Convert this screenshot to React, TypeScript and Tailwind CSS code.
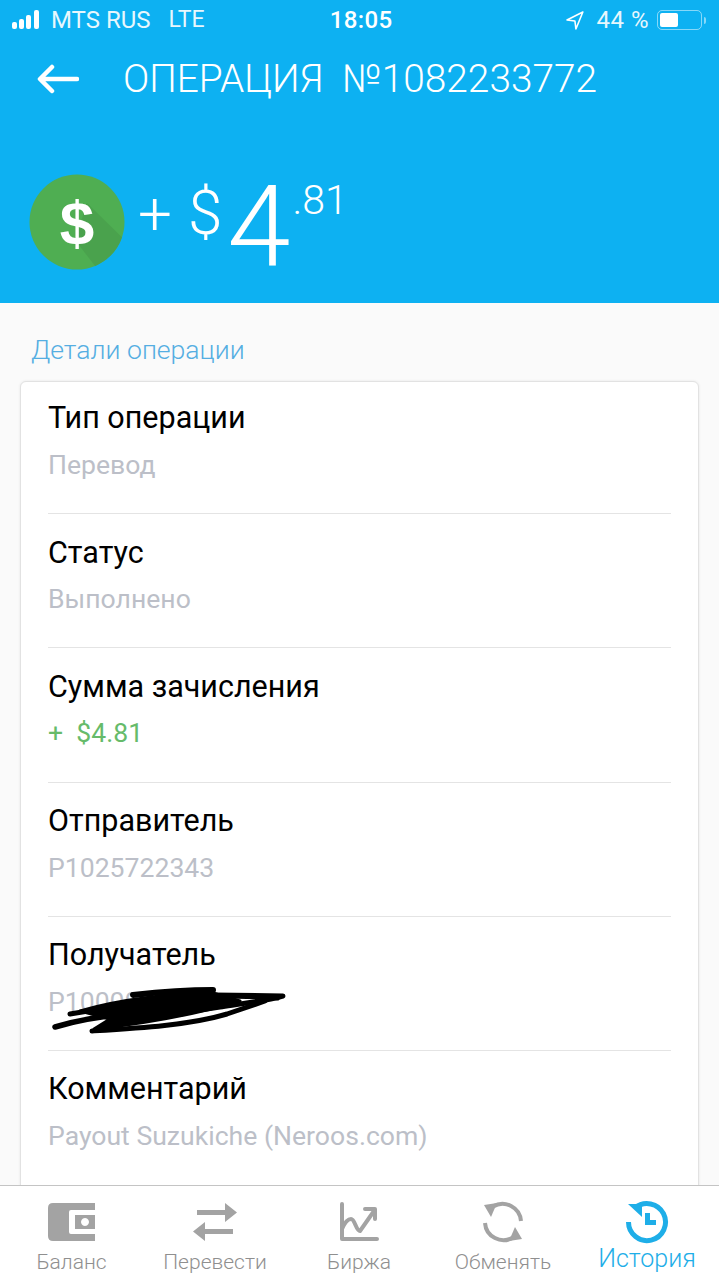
import React from 'react';

const rows = [
  { label: 'Тип операции', value: 'Перевод' },
  { label: 'Статус', value: 'Выполнено' },
  { label: 'Сумма зачисления', value: '+  $4.81', green: true },
  { label: 'Отправитель', value: 'P1025722343' },
  { label: 'Получатель', value: 'P1000000000', scribble: true },
  { label: 'Комментарий', value: 'Payout Suzukiche (Neroos.com)' },
];

const Scribble = () => (
  <svg className="absolute left-[2px] top-[70px]" width="250" height="50" viewBox="0 0 250 50" fill="none" stroke="#000" strokeLinecap="round" strokeLinejoin="round">
    <path d="M30 24 C70 12 125 6 163 6 L190 14 C150 26 100 36 44 42 L60 32 Z" fill="#000" strokeWidth="3" />
    <path d="M83 8 C110 5 140 3 163 3" strokeWidth="6" />
    <path d="M20 27 C60 20 100 14 163 8 L233 9 C215 14 190 17 170 20 C140 25 100 30 60 33" strokeWidth="5" />
    <path d="M42 44 C90 41 140 38 177 27 L215 14" strokeWidth="5" />
    <path d="M5 40 C25 34 45 30 70 28" strokeWidth="5.5" />
    <path d="M165 10 C185 10 205 10 228 12" strokeWidth="3" />
  </svg>
);

const Row = ({ label, value, green, scribble, last, first }: { label: string; value: string; green?: boolean; scribble?: boolean; last?: boolean; first?: boolean }) => (
  <div className={`relative mx-[27px] h-[134.2px] pt-[21.4px] ${first ? 'mt-[-2px]' : ''} ${last ? '' : 'border-b border-[#e4e4e4]'}`}>
    <div className="text-[30.5px] leading-[34px] text-black">{label}</div>
    <div className={`mt-[12.6px] whitespace-pre text-[26.6px] leading-[34px] ${green ? 'text-[#66bb6a]' : 'text-[#bcbfc8]'}`}>{value}</div>
    {scribble && <Scribble />}
  </div>
);

const Wallet = () => (
  <svg width="48" height="38" viewBox="0 0 48 38" fill="#a3a3a3">
    <path d="M47 0 H5 Q0 0 0 5 V33 Q0 38 5 38 H47 V31 H23 Q21 31 21 29 V9 Q21 7 23 7 H47 Z" />
    <path fillRule="evenodd" d="M27 12 H47 V26 H27 Z M37 15 a4 4 0 1 0 0.01 0 Z" />
  </svg>
);

const Transfer = () => (
  <svg width="46" height="38" viewBox="0 0 46 38" fill="#a3a3a3">
    <path d="M5 7 H33 V0 L45 9.5 L33 19 V12 H5 Z" />
    <path d="M41 26 H13 V19 L1 28.5 L13 38 V31 H41 Z" />
  </svg>
);

const Chart = () => (
  <svg width="40" height="40" viewBox="0 0 40 40" fill="none" stroke="#a3a3a3" strokeWidth="4" strokeLinecap="round" strokeLinejoin="round">
    <path d="M3 2 V37 H38" />
    <path d="M3 27 C6 20 9 17 12 17 C16 17 17 29 21 29 L35 9" />
    <path d="M26 7 H36 V17" />
  </svg>
);

const Exchange = () => (
  <svg width="42" height="42" viewBox="0 0 42 42" fill="none">
    <path d="M39 20 A18.5 18.5 0 0 0 11 5.5" stroke="#a3a3a3" strokeWidth="4" />
    <path d="M3 22 A18.5 18.5 0 0 0 31 36.5" stroke="#a3a3a3" strokeWidth="4" />
    <path d="M2 4 L15 2 L9 16 Z" fill="#a3a3a3" />
    <path d="M40 38 L27 40 L33 26 Z" fill="#a3a3a3" />
  </svg>
);

const History = () => (
  <svg width="44" height="44" viewBox="0 0 44 44" fill="none">
    <path d="M10 8 A18.5 18.5 0 1 1 3.5 22" stroke="#1eaee8" strokeWidth="5" />
    <path d="M3 4 H17 V17 Z" fill="#1eaee8" />
    <path d="M20 13 H25 V20 H31 V25 H20 Z" fill="#1eaee8" />
  </svg>
);

const tabs = [
  { label: 'Баланс', icon: <Wallet />, cls: 'w-[143px]' },
  { label: 'Перевести', icon: <Transfer />, cls: 'w-[144px]' },
  { label: 'Биржа', icon: <Chart />, cls: 'w-[144px]' },
  { label: 'Обменять', icon: <Exchange />, cls: 'w-[144px]' },
  { label: 'История', icon: <History />, cls: 'w-[144px]', active: true },
];

export default function App() {
  return (
    <div className="flex h-[1280px] w-[719px] flex-col overflow-hidden bg-[#fafafa] font-['Roboto',sans-serif]">
      <header className="h-[303px] shrink-0 bg-[#0db1f2] text-white">
        <div className="flex h-[40px] items-center pl-[12px] pr-[13px] text-[24px] font-normal">
          <div className="flex w-[292px] items-center">
            <svg width="33" height="20" viewBox="0 0 33 20" fill="#fff" className="mr-[6px]">
              <rect x="0" y="12" width="5" height="7" rx="2" />
              <rect x="7" y="9" width="5" height="10" rx="2" />
              <rect x="14" y="5" width="5" height="14" rx="2" />
              <rect x="22" y="0" width="5" height="19" rx="2" />
            </svg>
            <span className="opacity-90">MTS RUS</span>
            <span className="ml-[18px] text-[23px] opacity-90">LTE</span>
          </div>
          <span className="ml-[28px] text-[24px] font-medium tracking-[0.4px]">18:05</span>
          <svg className="ml-[172px]" width="20" height="20" viewBox="0 0 20 20" fill="none" stroke="#fff" strokeWidth="1.6" strokeLinejoin="round">
            <path d="M18 2 L2 10 L10 11 L11 19 Z" />
          </svg>
          <span className="ml-[12px] whitespace-nowrap tracking-[0.5px] opacity-90">44 %</span>
          <div className="ml-[8px] flex items-center">
            <div className="h-[20px] w-[45px] rounded-[5px] border border-white/50 p-[2px]">
              <div className="h-full w-[18px] rounded-[2px] bg-white" />
            </div>
            <div className="ml-[2px] h-[7px] w-[2px] rounded-r bg-white/50" />
          </div>
        </div>
        <div className="flex h-[78px] items-center pl-[37px]">
          <svg width="42" height="32" viewBox="0 0 42 32" fill="none" stroke="#fff" strokeWidth="4.5" strokeLinecap="round" strokeLinejoin="round">
            <path d="M40 16 H4 M15 4 L3 16 L15 28" />
          </svg>
          <h1 className="ml-[44px] whitespace-pre text-[38.8px] font-light leading-none">ОПЕРАЦИЯ  №1082233772</h1>
        </div>
        <div className="mt-[56px] flex pl-[29px]">
          <svg width="96" height="96" viewBox="0 0 96 96" className="shrink-0">
            <defs>
              <clipPath id="coin">
                <circle cx="48" cy="48" r="47.5" />
              </clipPath>
            </defs>
            <circle cx="48" cy="48" r="47.5" fill="#4fae52" />
            <path d="M58 29 L110 80 L80 110 L46 66 Z" fill="#4aa24d" clipPath="url(#coin)" />
            <text x="48" y="70" textAnchor="middle" fontFamily="Liberation Sans" fontWeight="700" fontSize="62" fill="#fff">$</text>
          </svg>
          <div className="ml-[13px] flex items-start font-light leading-none">
            <span className="mt-[10px] text-[60px]">+</span>
            <span className="ml-[16px] mt-[8px] text-[62px]">$</span>
            <span className="ml-[5px] mt-[-5px] text-[114px]">4</span>
            <span className="ml-[2px] mt-[6px] text-[41px]">.81</span>
          </div>
        </div>
      </header>

      <main className="min-h-0 flex-1 overflow-hidden px-[20px]">
        <div className="pl-[11px] pt-[30px] text-[26.6px] font-light leading-[34px] text-[#55aee2]">Детали операции</div>
        <div className="mt-[14px] h-[900px] rounded-[6px] border border-[#e2e2e2] bg-white shadow-[0_0_3px_rgba(0,0,0,0.08)]">
          {rows.map((r, i) => (
            <Row key={r.label} {...r} first={i === 0} last={i === rows.length - 1} />
          ))}
        </div>
      </main>

      <nav className="flex h-[95px] shrink-0 border-t border-[#c4c4c4] bg-white">
        {tabs.map((t) => (
          <div key={t.label} className={`${t.cls} flex flex-col items-center`}>
            <div className="mt-[14px] flex h-[44px] items-center">{t.icon}</div>
            <div className={`whitespace-nowrap font-light leading-[30px] ${t.active ? 'text-[25px] text-[#1eaee8]' : 'mt-[3px] text-[21px] text-[#8f8f8f]'}`}>{t.label}</div>
          </div>
        ))}
      </nav>
    </div>
  );
}
